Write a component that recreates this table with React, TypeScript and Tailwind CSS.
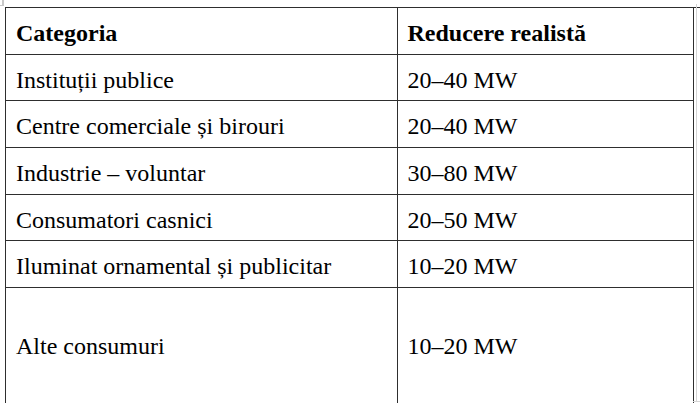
import React from 'react';

interface Row {
  category: string;
  reduction: string;
}

const rows: Row[] = [
  { category: 'Instituții publice', reduction: '20–40 MW' },
  { category: 'Centre comerciale și birouri', reduction: '20–40 MW' },
  { category: 'Industrie – voluntar', reduction: '30–80 MW' },
  { category: 'Consumatori casnici', reduction: '20–50 MW' },
  { category: 'Iluminat ornamental și publicitar', reduction: '10–20 MW' },
];

const cell =
  'flex items-center h-[46.7px] pt-[4px] pl-[10px] border-r-[1.5px] border-b-[1.5px] border-[#2e2e2e]';
const lastCell =
  'flex items-center h-[130px] pb-[14px] pl-[10px] border-r-[1.5px] border-b-[1.5px] border-[#2e2e2e]';

export default function App() {
  return (
    <div className="relative w-[700px] h-[403px] overflow-hidden bg-white text-black font-[Liberation_Serif] text-[24px] leading-none">
      {/* marcaje de pagină (colțuri) */}
      <div className="absolute left-[2px] top-0 w-[2px] h-[6px] bg-[#c8c8c8]" />
      <div className="absolute left-0 top-[5px] w-[4px] h-px bg-[#c8c8c8]" />
      <div className="absolute left-[696px] top-[4px] w-px h-[398px] bg-[#d4d4d4]" />
      <div className="absolute left-[693px] top-[401px] w-[7px] h-px bg-[#d4d4d4]" />

      <div className="ml-[5px] mt-[7px] grid grid-cols-[391.5px_296px] border-l-[1.5px] border-t-[1.5px] border-[#2e2e2e]">
        <div className={`${cell} font-bold`}>Categoria</div>
        <div className={`${cell} font-bold`}>Reducere realistă</div>
        {rows.map((row) => (
          <React.Fragment key={row.category}>
            <div className={cell}>{row.category}</div>
            <div className={cell}>{row.reduction}</div>
          </React.Fragment>
        ))}
        <div className={lastCell}>Alte consumuri</div>
        <div className={lastCell}>10–20 MW</div>
      </div>
    </div>
  );
}
